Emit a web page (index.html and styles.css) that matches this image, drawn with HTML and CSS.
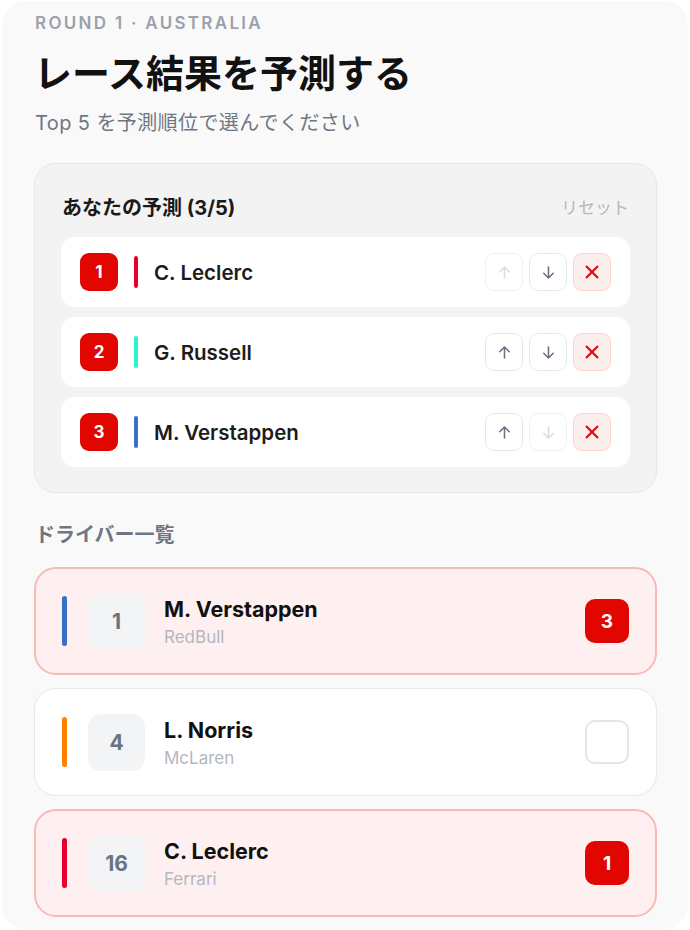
FILE: index.html
```html
<!DOCTYPE html>
<html lang="ja">
<head>
<meta charset="UTF-8">
<meta name="viewport" content="width=device-width,initial-scale=1">
<title>レース結果を予測する</title>
<link rel="stylesheet" href="styles.css">
</head>
<body>
<div class="screen">

  <div class="eyebrow">ROUND 1 · AUSTRALIA</div>
  <h1>レース結果を予測する</h1>
  <p class="sub">Top 5 を予測順位で選んでください</p>

  <!-- 予測 -->
  <section class="pred">
    <div class="pred-head">
      <h2>あなたの予測 (3/5)</h2>
      <span class="reset">リセット</span>
    </div>

    <div class="pick">
      <span class="pos">1</span>
      <i class="bar ferrari"></i>
      <span class="pname">C. Leclerc</span>
      <div class="acts">
        <button class="ic off"><svg viewBox="0 0 24 24"><path d="M12 19V5M6 11l6-6 6 6"/></svg></button>
        <button class="ic"><svg viewBox="0 0 24 24"><path d="M12 5v14M6 13l6 6 6-6"/></svg></button>
        <button class="ic del"><svg viewBox="0 0 24 24"><path d="M6 6l12 12M18 6L6 18"/></svg></button>
      </div>
    </div>

    <div class="pick">
      <span class="pos">2</span>
      <i class="bar merc"></i>
      <span class="pname">G. Russell</span>
      <div class="acts">
        <button class="ic"><svg viewBox="0 0 24 24"><path d="M12 19V5M6 11l6-6 6 6"/></svg></button>
        <button class="ic"><svg viewBox="0 0 24 24"><path d="M12 5v14M6 13l6 6 6-6"/></svg></button>
        <button class="ic del"><svg viewBox="0 0 24 24"><path d="M6 6l12 12M18 6L6 18"/></svg></button>
      </div>
    </div>

    <div class="pick">
      <span class="pos">3</span>
      <i class="bar rbr"></i>
      <span class="pname">M. Verstappen</span>
      <div class="acts">
        <button class="ic"><svg viewBox="0 0 24 24"><path d="M12 19V5M6 11l6-6 6 6"/></svg></button>
        <button class="ic off"><svg viewBox="0 0 24 24"><path d="M12 5v14M6 13l6 6 6-6"/></svg></button>
        <button class="ic del"><svg viewBox="0 0 24 24"><path d="M6 6l12 12M18 6L6 18"/></svg></button>
      </div>
    </div>
  </section>

  <!-- ドライバー -->
  <h3>ドライバー一覧</h3>

  <div class="drivers">
    <div class="drv sel">
      <i class="stripe rbr"></i>
      <span class="num">1</span>
      <div class="info">
        <b>M. Verstappen</b>
        <span>RedBull</span>
      </div>
      <span class="mark">3</span>
    </div>

    <div class="drv">
      <i class="stripe mcl"></i>
      <span class="num">4</span>
      <div class="info">
        <b>L. Norris</b>
        <span>McLaren</span>
      </div>
      <span class="mark empty"></span>
    </div>

    <div class="drv sel">
      <i class="stripe ferrari"></i>
      <span class="num">16</span>
      <div class="info">
        <b>C. Leclerc</b>
        <span>Ferrari</span>
      </div>
      <span class="mark">1</span>
    </div>
  </div>

</div>
</body>
</html>
```

FILE: styles.css
```css
*{margin:0;padding:0;box-sizing:border-box}
body{background:#fff;font-family:Inter,"Noto Sans CJK JP",sans-serif;color:#141414}
.screen{margin:1px 2px 2px;background:#f9f9fa;border-radius:24px;padding:10px 31px 12px 32px}

.eyebrow{font-size:17px;line-height:24px;font-weight:600;letter-spacing:2.3px;color:#9ba1ac;padding-left:1px}
h1{margin-top:14px;font-size:38px;line-height:48px;font-weight:700;color:#111}
.sub{margin-top:12px;font-size:20px;line-height:28px;letter-spacing:.4px;color:#6f7682;padding-left:1px}

/* 予測 */
.pred{margin-top:26px;background:#f3f3f4;border:1px solid #e7e7e9;border-radius:22px;padding:26px 26px 25px}
.pred-head{display:flex;justify-content:space-between;align-items:center;height:32px;margin-bottom:15px;padding-left:1px}
h2{font-size:20px;font-weight:700;color:#1a1a1a}
.reset{font-size:17px;color:#b3b7be;padding-right:1px}
.pick{display:flex;align-items:center;height:70px;background:#fff;border-radius:14px;padding:0 19px;margin-bottom:10px}
.pick:last-child{margin-bottom:0}
.pos{width:38px;height:38px;border-radius:9px;background:#e10600;color:#fff;font-size:17px;font-weight:700;display:flex;justify-content:center;align-items:center}
.bar{width:4px;height:32px;border-radius:2px;margin:0 16px}
.pname{flex:1;font-size:20.5px;font-weight:600;color:#1c1c1c}
.acts{display:flex;gap:6px}
.ic{width:38px;height:38px;border:1px solid #e6e7ea;border-radius:9px;background:#fff;display:flex;justify-content:center;align-items:center}
.ic svg{width:19px;height:19px;fill:none;stroke:#6b7280;stroke-width:2;stroke-linecap:round;stroke-linejoin:round}
.ic.off{border-color:#f0f0f2}
.ic.off svg{stroke:#dadde2}
.ic.del{background:#fdeeee;border-color:#fbd3d3}
.ic.del svg{width:24px;height:24px;stroke:#e10600;stroke-linecap:butt}

.ferrari{background:#e8002d}
.merc{background:#27f4d2}
.rbr{background:#3671c6}
.mcl{background:#ff8000}

/* ドライバー */
h3{margin-top:28px;font-size:20px;line-height:28px;font-weight:700;color:#6f7682;padding-left:1px}
.drivers{margin-top:18px;display:flex;flex-direction:column;gap:13px}
.drv{display:flex;align-items:center;height:108px;background:#fff;border:1px solid #e8e8ea;border-radius:22px;padding:0 27px 0 27px}
.drv.sel{background:#fef0f0;border:2px solid #f9bab6;padding:0 26px}
.stripe{width:5px;height:50px;border-radius:3px}
.num{width:57px;height:57px;margin-left:21px;border-radius:13px;background:#f3f4f6;color:#6b7280;font-size:21px;font-weight:700;display:flex;justify-content:center;align-items:center}
.info{flex:1;margin-left:19px;display:flex;flex-direction:column;gap:3px}
.info b{font-size:21.5px;line-height:28px;font-weight:700;color:#111}
.info span{font-size:17px;line-height:22px;color:#b3b7bf}
.mark{width:44px;height:44px;border-radius:10px;background:#e10600;color:#fff;font-size:19px;font-weight:700;display:flex;justify-content:center;align-items:center}
.mark.empty{background:#fff;border:2px solid #e6e6e8}
```
